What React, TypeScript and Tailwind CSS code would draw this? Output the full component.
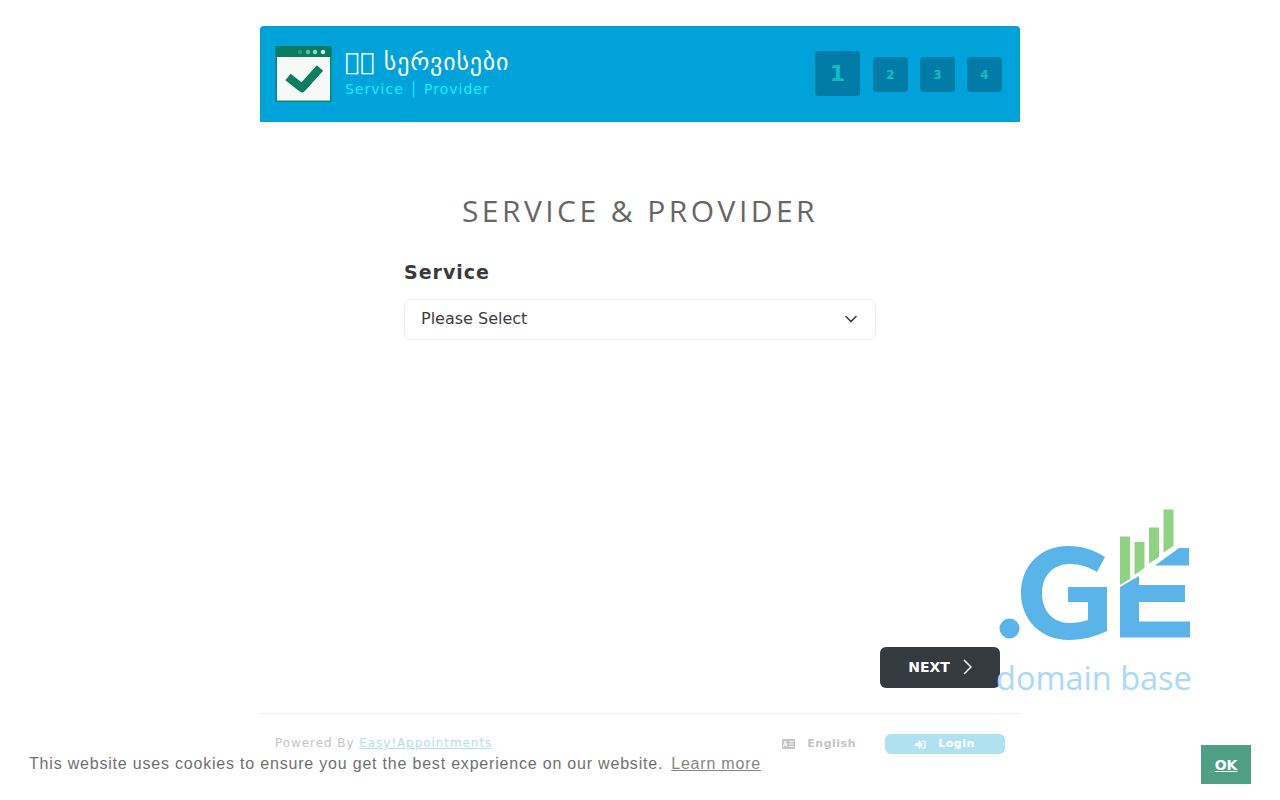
import { FaSignInAlt } from "react-icons/fa";

const dejavu = "font-['DejaVu_Sans',sans-serif]";

function HeaderLogo() {
  return (
    <svg width="57" height="56" viewBox="0 0 57 56" className="shrink-0">
      <rect x="0.5" y="0" width="56" height="56" rx="1.5" fill="#0b8a68" />
      <rect x="0.5" y="0" width="56" height="11" rx="1.5" fill="#0a7d60" />
      <rect x="2" y="11" width="53" height="43.5" fill="#f7f9f8" />
      <circle cx="25" cy="6" r="2.2" fill="#2b9c7c" />
      <circle cx="33" cy="6" r="2.2" fill="#5cc0a2" />
      <circle cx="40" cy="6" r="2.2" fill="#8fdcc4" />
      <circle cx="48" cy="6" r="2.2" fill="#dff5ee" />
      <path d="M13 31 L27 42 L45 22" fill="none" stroke="#0b7f60" strokeWidth="8.5" strokeLinejoin="round" />
    </svg>
  );
}

function LanguageIcon() {
  return (
    <svg width="13" height="10" viewBox="0 0 13 10">
      <rect width="13" height="10" rx="1" fill="#c4c4c4" />
      <path d="M1.5 8 L3.3 2 L5.1 8 M2.3 6 H4.3" fill="none" stroke="white" strokeWidth="1" />
      <path d="M7.5 2.5 H11.5 M7.5 5 H11.5 M7.5 7.5 H11.5" fill="none" stroke="white" strokeWidth="0.9" />
    </svg>
  );
}

function Step({ n, active }: { n: number; active?: boolean }) {
  return (
    <div
      className={
        active
          ? "mr-px flex h-[45px] w-[45px] items-center justify-center rounded bg-[#027ca6] text-[22px] font-bold text-[#12bcc4]"
          : "mt-[6px] flex h-[35px] w-[35px] items-center justify-center rounded bg-[#027ca6] text-xs font-bold text-[#12bcc4]"
      }
    >
      {n}
    </div>
  );
}

function DomainLogo() {
  return (
    <div className="absolute left-[996px] top-[505px] w-[197px]">
      <svg width="196" height="136" viewBox="997 505 196 136" className="ml-px block">
        <circle cx="1009.5" cy="628.5" r="10" fill="#5ab4ea" />
        <path
          d="M1105 557 C1093 549 1080 546 1068 546 C1040 546 1021 566 1021 593 C1021 620 1041 640 1069 640 C1083 640 1097 636 1107 631 V587 H1068 V602 H1088 V620 C1082 622 1076 623 1070 623 C1052 623 1042 610 1042 593 C1042 576 1053 564 1070 564 C1080 564 1089 567 1097 572 Z"
          fill="#5ab4ea"
        />
        <path d="M1120 587 L1139 576 V585 H1185 V602 H1139 V621.5 H1190 V637.5 H1120 Z" fill="#5ab4ea" />
        <path d="M1155 565.5 L1179 548 H1189 V565.5 Z" fill="#5ab4ea" />
        <path d="M1120 536.5 H1130 V579 L1120 585 Z" fill="#90d283" />
        <path d="M1134.5 542 H1144.5 V568 L1134.5 575 Z" fill="#90d283" />
        <path d="M1149 527.5 H1159 V557 L1149 563.5 Z" fill="#90d283" />
        <path d="M1163.5 509.5 H1173.5 V546 L1163.5 552.5 Z" fill="#90d283" />
      </svg>
      <div className="mt-[18px] font-['Open_Sans',sans-serif] text-[32.5px] leading-[38px] whitespace-nowrap text-[#a9daf9]">
        domain base
      </div>
    </div>
  );
}

export default function App() {
  return (
    <div className={`relative h-[800px] overflow-hidden bg-white ${dejavu}`}>
      <div className="mx-auto flex h-[800px] w-[760px] flex-col pt-[26px]">
        <header className="flex h-[96px] items-center justify-between rounded-t bg-[#00a2da] pr-[18px] pl-[15px]">
          <div className="flex items-center gap-[14px]">
            <HeaderLogo />
            <div className="-mt-[2px] -ml-px">
              <div className="-mt-px text-[24px] leading-[30px] tracking-[0.8px] text-white">
                {"\uE000\uE001"} სერვისები
              </div>
              <div className="mt-[2px] text-sm leading-[20px] tracking-[1px] text-[#0ff0ff]">
                Service │ Provider
              </div>
            </div>
          </div>
          <div className="-mt-[1px] flex items-start gap-3">
            <Step n={1} active />
            <Step n={2} />
            <Step n={3} />
            <Step n={4} />
          </div>
        </header>

        <main className="flex flex-1 flex-col">
          <h1 className="mt-[70px] text-center font-['Open_Sans',sans-serif] text-[30px] leading-[38px] tracking-[3.45px] text-[#666666]">
            SERVICE &amp; PROVIDER
          </h1>
          <div className="mx-auto mt-[29px] w-[472px]">
            <div className="text-[19px] leading-[26px] font-bold tracking-[1px] text-[#3a3a3a]">Service</div>
            <div className="mt-[14px] flex h-[41px] items-center justify-between rounded-md border border-[#eef0f2] pr-[16px] pb-[1px] pl-[16px] text-base text-[#3d3d3d]">
              <span>Please Select</span>
              <svg width="16" height="16" viewBox="0 0 16 16" fill="none" stroke="#343a40" strokeWidth="1.6" strokeLinecap="round" strokeLinejoin="round">
                <path d="m3 5.5 5 5 5-5" />
              </svg>
            </div>
          </div>
          <div className="mt-auto mb-[25px] flex justify-end pr-[20px]">
            <div className="flex h-[41px] w-[120px] items-center justify-center gap-[13px] rounded-md bg-[#343a40] pb-[2px] text-sm font-bold text-white">
              NEXT
              <svg width="9" height="16" viewBox="0 0 9 16" fill="none" stroke="white" strokeWidth="1.5">
                <path d="M1 1 L8 8 L1 15" />
              </svg>
            </div>
          </div>
        </main>

        <footer className="flex h-[87px] items-start justify-between border-t border-[#eceeef] pr-[15px] pl-[15px] text-xs">
          <div className="mt-[21px] leading-[16px] tracking-[0.93px] text-[#c4c4c4]">
            Powered By <span className="text-[#b2e0ea] underline">Easy!Appointments</span>
          </div>
          <div className="mt-[20px] flex items-center gap-[29px]">
            <div className="flex items-center gap-[12px] text-[11px] font-bold tracking-[0.5px] text-[#c4c4c4]">
              <LanguageIcon />
              English
            </div>
            <div className="flex h-[20px] w-[120px] items-center justify-center gap-[12px] rounded-md bg-[#b0e1f1] text-[11px] font-bold tracking-[0.5px] text-white">
              <FaSignInAlt size={11} />
              Login
            </div>
          </div>
        </footer>
      </div>

      <DomainLogo />

      <div className="absolute right-[29px] bottom-[16px] left-[29px] flex items-center justify-between">
        <div className="-mt-[2px] font-['Liberation_Sans',sans-serif] text-base tracking-[0.8px] text-[#707070]">
          This website uses cookies to ensure you get the best experience on our website.
          <span className="ml-[8px] text-[#858585] underline">Learn more</span>
        </div>
        <div className="flex h-[39px] w-[50px] items-center justify-center bg-[#4f9f84] text-sm font-bold text-white underline">
          OK
        </div>
      </div>
    </div>
  );
}
